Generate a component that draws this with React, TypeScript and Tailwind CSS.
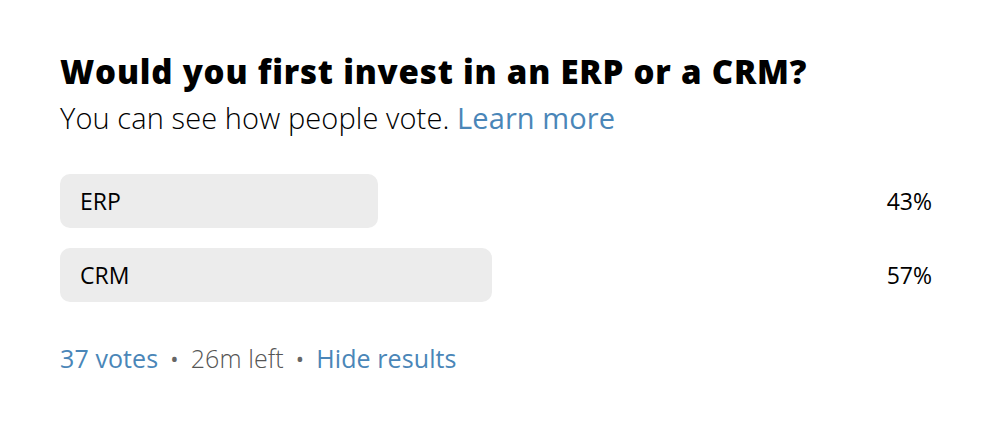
const options = [
  { label: 'ERP', percent: 43, width: 'w-[318px]' },
  { label: 'CRM', percent: 57, width: 'w-[432px]' },
]

export default function App() {
  return (
    <div className="h-[431px] w-[1000px] bg-white px-[60px] pt-[52px] text-black" style={{ fontFamily: '"Open Sans", Inter, sans-serif' }}>
      {/* question */}
      <h1 className="text-[33px] font-extrabold leading-[40px] tracking-[0.8px]">Would you first invest in an ERP or a CRM?</h1>
      <p className="mt-[8px] text-[29px] font-light leading-[36px] tracking-[0.1px]">
        You can see how people vote. <span className="font-normal text-[#4a86b8]">Learn more</span>
      </p>

      {/* results */}
      <div className="mt-[38px] flex w-[872px] flex-col gap-[20px]">
        {options.map((o) => (
          <div key={o.label} className="flex items-center justify-between">
            <div className={`flex h-[54px] ${o.width} items-center rounded-[10px] bg-[#ececec] pl-[20px] text-[23px]`}>{o.label}</div>
            <span className="text-[23px]">{o.percent}%</span>
          </div>
        ))}
      </div>

      {/* footer */}
      <div className="mt-[40px] flex items-center text-[25px] leading-[32px] tracking-[0.1px]">
        <span className="text-[#4a86b8]">37 votes</span>
        <span className="mx-[12px] text-[22px] text-[#666]">•</span>
        <span className="font-light text-[#555]">26m left</span>
        <span className="mx-[12px] text-[22px] text-[#666]">•</span>
        <span className="text-[#4a86b8]">Hide results</span>
      </div>
    </div>
  )
}
